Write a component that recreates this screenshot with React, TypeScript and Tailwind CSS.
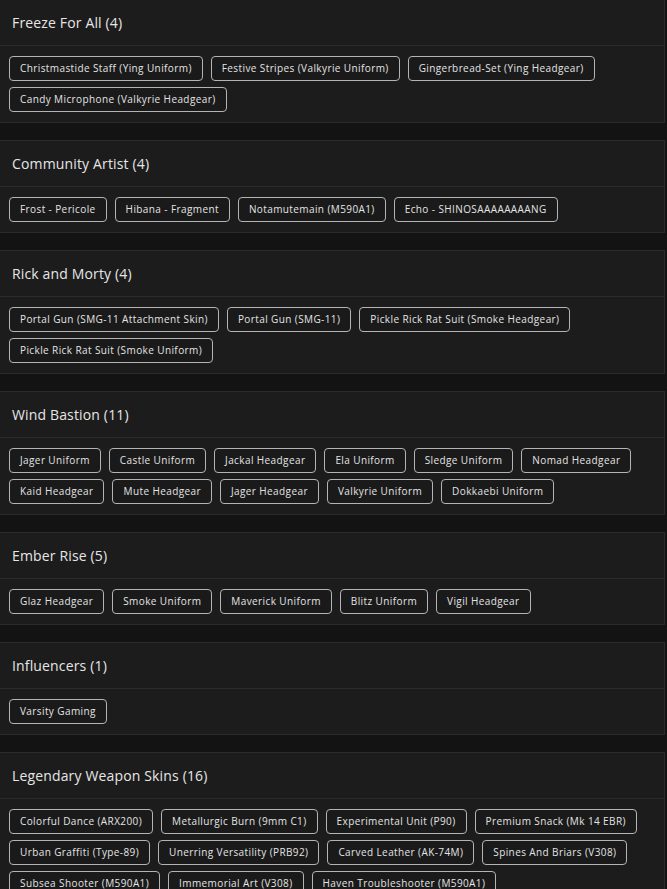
const sections: { title: string; items: string[] }[] = [
  {
    title: 'Freeze For All',
    items: [
      'Christmastide Staff (Ying Uniform)',
      'Festive Stripes (Valkyrie Uniform)',
      'Gingerbread-Set (Ying Headgear)',
      'Candy Microphone (Valkyrie Headgear)',
    ],
  },
  {
    title: 'Community Artist',
    items: ['Frost - Pericole', 'Hibana - Fragment', 'Notamutemain (M590A1)', 'Echo - SHINOSAAAAAAAANG'],
  },
  {
    title: 'Rick and Morty',
    items: [
      'Portal Gun (SMG-11 Attachment Skin)',
      'Portal Gun (SMG-11)',
      'Pickle Rick Rat Suit (Smoke Headgear)',
      'Pickle Rick Rat Suit (Smoke Uniform)',
    ],
  },
  {
    title: 'Wind Bastion',
    items: [
      'Jager Uniform',
      'Castle Uniform',
      'Jackal Headgear',
      'Ela Uniform',
      'Sledge Uniform',
      'Nomad Headgear',
      'Kaid Headgear',
      'Mute Headgear',
      'Jager Headgear',
      'Valkyrie Uniform',
      'Dokkaebi Uniform',
    ],
  },
  {
    title: 'Ember Rise',
    items: ['Glaz Headgear', 'Smoke Uniform', 'Maverick Uniform', 'Blitz Uniform', 'Vigil Headgear'],
  },
  { title: 'Influencers', items: ['Varsity Gaming'] },
  {
    title: 'Legendary Weapon Skins',
    items: [
      'Colorful Dance (ARX200)',
      'Metallurgic Burn (9mm C1)',
      'Experimental Unit (P90)',
      'Premium Snack (Mk 14 EBR)',
      'Urban Graffiti (Type-89)',
      'Unerring Versatility (PRB92)',
      'Carved Leather (AK-74M)',
      'Spines And Briars (V308)',
      'Subsea Shooter (M590A1)',
      'Immemorial Art (V308)',
      'Haven Troubleshooter (M590A1)',
      'Frostbitten Arsenal (Commando 9)',
      'Royal Ember (F2)',
      'Silent Reign (T-95 LSW)',
      'Desert Mirage (417)',
      'Night Bloom (SMG-12)',
    ],
  },
]

function Section({ title, items }: { title: string; items: string[] }) {
  return (
    <div className="w-[665px] border-y border-r border-[#2b2b2b] bg-[#1c1c1c]">
      <div className="flex h-[46px] items-center border-b border-[#2b2b2b] px-3 pb-px">
        <h3 className="text-[14px] tracking-[0.15px] text-[#e6e6e6]">
          {title} ({items.length})
        </h3>
      </div>
      <div className="flex flex-wrap gap-x-2 gap-y-[6px] py-[10px] pl-[9px] pr-[10px]">
        {items.map((item) => (
          <span
            key={item}
            className="flex h-[25px] items-center whitespace-nowrap rounded-[4px] border border-[#b4b4b4] bg-[#1a1a1a] px-[10px] text-[10px] tracking-[0.4px] text-[#e4e4e4]"
          >
            {item}
          </span>
        ))}
      </div>
    </div>
  )
}

export default function App() {
  return (
    <div className="min-h-screen bg-[#131313] font-['Open_Sans',sans-serif]">
      <div className="-mt-px flex flex-col gap-[17px] pb-8">
        {sections.map((s) => (
          <Section key={s.title} title={s.title} items={s.items} />
        ))}
      </div>
    </div>
  )
}
